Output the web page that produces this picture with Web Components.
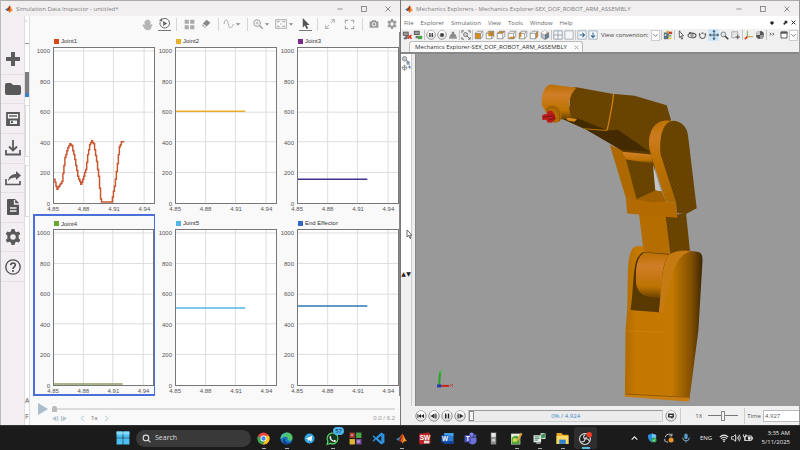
<!DOCTYPE html>
<html lang="en">
<head>
<meta charset="utf-8">
<title>Simulation desktop</title>
<style>
html, body { margin: 0; height: 100%; }
body { font: 6px/8px "Open Sans", "Noto Sans", sans-serif; color: #777; background: #f9f9f9; overflow: hidden; }
</style>
</head>
<body>
<desktop-shell>
  <inspector-window slot="left"></inspector-window>
  <mechanics-window slot="right"></mechanics-window>
  <task-bar slot="bar"></task-bar>
</desktop-shell>
<script>
const caret = '<path d="M1 3l3 3 3-3z" fill="#888"/>';
const cube = face => `<path d="M1.500 4L4 1.500h6.500v6L8 10.500H1.500z" fill="#fafafa"/>${face}<path d="M1.500 4H8v6.500H1.500zM1.500 4L4 1.500h6.500L8 4M10.500 1.500v6L8 10.500" fill="none" stroke="#777" stroke-width=".8"/>`;
const O = '#d98d18';
const round = inner => `<circle cx="6" cy="6" r="5.200" fill="#e6e6e6" stroke="#888" stroke-width=".9"/><path d="M2 5a4 4 0 0 1 8 0z" fill="#fff"/>${inner}`;
const ICONS = {
  matlab: ['0 0 16 16', '<path d="M0 9l5-3 3 2-3 4z" fill="#3f7fb5"/><path d="M5 6c2-1 3-5 5-5 1 2 3 8 6 11-3-1-4 0-7 4 0-3-2-4-4-4l2-2z" fill="#d9531e"/><path d="M10 1c-1 4-2 8-5 11l-1-1c2-4 4-5 6-10z" fill="#7c2415"/><path d="M10 2c1 4 1 8-1 13 2-3 4-4 7-3C13 9 12 5 10 2z" fill="#ee9a2d"/>'],
  min: ['0 0 8 8', '<path d="M1.500 4h5" stroke="#888" stroke-width=".9"/>'],
  max: ['0 0 8 8', '<rect x="1.500" y="1.500" width="4.800" height="5" fill="none" stroke="#777" stroke-width=".8"/>'],
  close: ['0 0 8 8', '<path d="M1.500 1.500l5 5m0-5l-5 5" stroke="#777" stroke-width=".8"/>'],
  plus: ['0 0 16 16', '<path d="M6 1h4v5h5v4h-5v5H6v-5H1V6h5z" fill="#5c5c5c"/>'],
  folder: ['0 0 16 16', '<path d="M0 4q0-2 2-2h4l2 2h6q2 0 2 2v6q0 2-2 2H2q-2 0-2-2z" fill="#595959"/>'],
  save: ['0 0 16 16', '<path d="M2 2h12v12H2z" fill="#f6f3f5" stroke="#5a5a5a" stroke-width="1.800"/><path d="M4 5h8" stroke="#5a5a5a" stroke-width="1.400"/><path d="M2 7.500h12V14H2z" fill="#5a5a5a"/><path d="M5 9.500h7V13H5z" fill="#f0f0f0"/><path d="M6 10.300h1.800v1.800H6z" fill="#333"/>'],
  download: ['0 0 16 16', '<path d="M8 0v10M4 6.500l4 4 4-4M1 10v4.500h14V10" fill="none" stroke="#5a5a5a" stroke-width="1.800"/>'],
  share: ['0 0 16 16', '<path d="M1 9v5.500h14V11" fill="none" stroke="#5a5a5a" stroke-width="1.700"/><path d="M3 11c1-5 4-7 8-7V1l5 4.500-5 4.500V7.500c-4 0-6 1-8 3.500z" fill="#5a5a5a"/>'],
  doc: ['0 0 16 16', '<path d="M2 1q0-1 1-1h7l4 4v11q0 1-1 1H3q-1 0-1-1z" fill="#555"/><path d="M9.500 1v4H14M5 9h6.500M5 12h6.500" stroke="#f4f0f2" stroke-width="1.300" fill="none"/>'],
  gear: ['0 0 16 16', '<path d="M6.500 0h3l.5 2.300 1.500.9 2.300-.8 1.500 2.600-1.700 1.600v2.800l1.700 1.600-1.500 2.600-2.300-.8-1.500.9-.5 2.300h-3L6 13.700l-1.500-.9-2.300.8L.700 11l1.700-1.600V6.600L.700 5l1.500-2.600 2.300.8L6 2.300zM8 5.200a2.800 2.800 0 1 0 0 5.600 2.800 2.800 0 0 0 0-5.600z" fill="currentColor" fill-rule="evenodd"/>'],
  help: ['0 0 16 16', '<circle cx="8" cy="8" r="7.200" fill="none" stroke="#4c4c4c" stroke-width="1.300"/><path d="M5.700 6.300C5.800 3.300 10.300 3.300 10.300 6 10.300 8 8 7.800 8 10" fill="none" stroke="#4c4c4c" stroke-width="1.600"/><circle cx="8" cy="12" r="1" fill="#4c4c4c"/>'],
  hand: ['0 0 16 16', '<path d="M4 8V3.500q1-1.500 2 0V2q1-1.500 2 0v-.5q1-1.500 2 0V3q1-1 2 .2V10l1.200-2q1.500-.8 1.800.5L12.500 14q-.5 2-3 2-4 0-5.500-2L1 9.500Q1 8 2.500 8L4 9.500z" fill="#b5b5b5" stroke="#aaa" stroke-width=".4"/>'],
  replay: ['0 0 16 16', '<path d="M3 3A7 7 0 1 1 1.500 6" fill="none" stroke="#666" stroke-width="1.400"/><path d="M0 4.500L5 5 4 0z" fill="#666"/><path d="M6 4.500L12 8l-6 3.500z" fill="#666"/>'],
  grid: ['0 0 16 16', '<path d="M1 1h6v6H1zM9 1h6v6H9zM1 9h6v6H1zM9 9h6v6H9z" fill="#aaa"/>'],
  eraser: ['0 0 16 16', '<path d="M9 1l6 5-6 6-6-5z" fill="#888"/><path d="M2.500 8l5.500 5-2 1.500-5-4z" fill="#bbb"/>'],
  wave: ['0 0 16 16', '<path d="M0 8C2-2 5 1 6 5l2 7c1 4 5 2 7-4" fill="none" stroke="#aaa" stroke-width="1.500"/>'],
  caret: ['0 0 8 8', caret],
  zoom: ['0 0 16 16', '<circle cx="6.500" cy="6.500" r="5.300" fill="none" stroke="#999" stroke-width="1.500"/><path d="M10.500 10.500L15.500 15.500" stroke="#999" stroke-width="2"/><path d="M4 6.500h5M6.500 4v5" stroke="#aaa" stroke-width="1.300"/>'],
  fit: ['0 0 18 16', '<rect x="1" y="1.500" width="16" height="13" fill="none" stroke="#aaa" stroke-width="1.400"/><path d="M4 6V4h3M11 4h3v2M14 10v2h-3M7 12H4v-2M8 8h2" fill="none" stroke="#999" stroke-width="1.400"/>'],
  pointer: ['0 0 16 16', '<path d="M4 0l10 10H9.500l2.500 5-2.500 1L7 11l-3 3z" fill="#555"/>'],
  expand: ['0 0 16 16', '<path d="M9.500 6.500L15 1M10 1h5v5M6.500 9.500L1 15M1 10v5h5" fill="none" stroke="#aaa" stroke-width="1.500"/>'],
  full: ['0 0 16 16', '<path d="M2 6V2h4M10 2h4v4M14 10v4h-4M6 14H2v-4" fill="none" stroke="#aaa" stroke-width="1.700"/>'],
  camera: ['0 0 16 16', '<path d="M1 4h3l1-2h6l1 2h3v10H1z" fill="#999"/><circle cx="8" cy="8.500" r="3.500" fill="#f5f5f5"/><circle cx="8" cy="8.500" r="2" fill="#999"/>'],
  playpale: ['0 0 10 12', '<path d="M0 0l10 6-10 6z" fill="#a9bfcd"/>'],
  stepback: ['0 0 8 8', '<path d="M5 1v6L0 4zM6 1h1.200v6H6z" fill="#b3c6d2"/>'],
  stepfwd: ['0 0 8 8', '<path d="M3 1v6l5-3zM1 1h1.200v6H1z" fill="#b3c6d2"/>'],
  left: ['0 0 8 8', '<path d="M5.500 1L2.500 4l3 3" fill="none" stroke="#9db8c8"/>'],
  right: ['0 0 8 8', '<path d="M2.500 1l3 3-3 3" fill="none" stroke="#9db8c8"/>'],
  kill: ['0 0 12 12', '<path d="M1 2h7v5H1z" fill="#555"/><path d="M2 3h5v3H2z" fill="#999"/><path d="M4 7h3v3H4zM2 9h4v2H2z" fill="#666"/><path d="M7 6l4.500 4.500m0-4.500L7 10.500" stroke="#d03020" stroke-width="1.700"/>'],
  connect: ['0 0 12 12', '<path d="M1 1h7v5H1z" fill="#555"/><path d="M2 2h5v3H2z" fill="#999"/><path d="M3 7h3v3H3z" fill="#777"/><path d="M6 7h5v4H6z" fill="#42a744"/>'],
  rpause: ['0 0 12 12', round('<path d="M4 3.500h1.400v5H4zM6.800 3.500h1.400v5H6.800z" fill="#222"/>')],
  rstop: ['0 0 12 12', round('<path d="M4 4h4v4H4z" fill="#333"/>')],
  rfirst: ['0 0 12 12', round('<path d="M6 4v4L3.200 6zM9 4v4L6.200 6zM2.500 4h.8v4h-.8z" fill="#222"/>')],
  rprev: ['0 0 12 12', round('<path d="M6.500 3.500v5L2.500 6zM7.300 3.500h1.200v5H7.300z" fill="#333"/>')],
  rnext: ['0 0 12 12', round('<path d="M5.500 3.500v5l4-2.500zM3.500 3.500h1.200v5H3.500z" fill="#333"/>')],
  rloop: ['0 0 12 12', round('<path d="M3 3.500h6v4H7.500V9L5.500 7.500H3z" fill="#333"/><path d="M4.500 5h3v1.200h-3z" fill="#eee"/>')],
  weight: ['0 0 12 12', '<path d="M4.500 2h3v3h1.500l1.500 5h-9L3 5h1.500z" fill="#888"/><path d="M1.500 8h9v2.500h-9z" fill="#999"/>'],
  fitview: ['0 0 12 12', '<path d="M1 3.500V1h2.500M8.500 1H11v2.500M11 8.500V11H8.500M3.500 11H1V8.500" fill="none" stroke="#555"/><circle cx="5.500" cy="5.500" r="2.500" fill="#ccc" stroke="#555" stroke-width=".8"/><path d="M7 7l3 3" stroke="#555"/>'],
  cfront: ['0 0 12 12', cube(`<path d="M1.500 4H8v6.500H1.500z" fill="${O}"/>`)],
  cback: ['0 0 12 12', cube(`<path d="M4 1.500h6.500v6H4z" fill="${O}"/>`)],
  ctop: ['0 0 12 12', cube(`<path d="M1.500 4L4 1.500h6.500L8 4z" fill="${O}"/>`)],
  cbottom: ['0 0 12 12', cube(`<path d="M1.500 10.500L4 8h6.500L8 10.500z" fill="${O}"/>`)],
  cleft: ['0 0 12 12', cube(`<path d="M1.500 4L4 1.500v6L1.500 10.500z" fill="${O}"/>`)],
  cright: ['0 0 12 12', cube(`<path d="M8 4l2.500-2.500v6L8 10.500z" fill="${O}"/>`)],
  ciso: ['0 0 12 12', '<path d="M6 1l4.500 2v6L6 11.500 1.500 9V3z" fill="#b8bec6" stroke="#777" stroke-width=".7"/><path d="M6 1l4.500 2L6 5 1.500 3z" fill="#fff"/><path d="M6 5l4.500-2v6L6 11.500z" fill="#6d7c8c"/><path d="M8 2l2 1-2 1z" fill="#d98d18"/>'],
  split4: ['0 0 12 12', '<path d="M1 1h10v10H1zM6 1v10M1 6h10" fill="#f8f8f8" stroke="#8d99a6"/>'],
  single: ['0 0 12 12', '<path d="M1 1h10v10H1z" fill="#f4f6f8" stroke="#9aa5b0"/>'],
  splitv: ['0 0 12 12', '<path d="M1 1h10v10H1z" fill="#f4f7fa" stroke="#9aa9b8"/><path d="M3 6h6M6.500 3.500L9 6 6.500 8.500" fill="none" stroke="#3a6b96" stroke-width="1.300"/>'],
  splith: ['0 0 12 12', '<path d="M1 1h10v10H1z" fill="#f4f7fa" stroke="#9aa9b8"/><path d="M6 3v6M3.500 6.500L6 9l2.500-2.500" fill="none" stroke="#3a6b96" stroke-width="1.300"/>'],
  palette: ['0 0 12 12', '<path d="M1 3h6v8H1z" fill="#556d86"/><path d="M4 1h3v3H4z" fill="#d8a33b"/><path d="M7 2h4v3H7z" fill="#bc4a34"/><path d="M6 6h4v2H6z" fill="#7db65c"/><path d="M6 9h4v2H6z" fill="#e7c03c"/><path d="M2 5h2v2H2z" fill="#e5e5e5"/>'],
  select: ['0 0 12 12', '<path d="M4 1l5 6H6.500L8 10.500l-1.200.5-1.500-3.300L4 9z" fill="#fff" stroke="#333" stroke-width=".9"/>'],
  orbit: ['0 0 12 12', '<ellipse cx="6" cy="6.500" rx="4.800" ry="2.800" fill="none" stroke="#555" stroke-width="1.300"/><circle cx="6" cy="6.500" r="2" fill="#999"/><path d="M2 3l3-1-1 3z" fill="#555"/>'],
  roll: ['0 0 12 12', '<path d="M2 4q0 6 4 6t4-6" fill="none" stroke="#666" stroke-width="1.500"/><path d="M4.500 2h3v2h-3zM.5 5L2 2l2 3zM8 5l1.500-3 2 3z" fill="#777"/>'],
  pan: ['0 0 12 12', '<path d="M6 0v12M0 6h12" stroke="#47657f" stroke-width="1.200"/><path d="M4 2.500L6 0l2 2.500zM4 9.500L6 12l2-2.500zM2.500 4L0 6l2.500 2zM9.500 4L12 6 9.500 8z" fill="#47657f"/>'],
  lens: ['0 0 12 12', '<circle cx="4.500" cy="4.500" r="3.200" fill="#dce6ef" stroke="#777" stroke-width="1.200"/><path d="M7 7l4 4" stroke="#333" stroke-width="1.800"/>'],
  region: ['0 0 12 12', '<path d="M1 1h8v8H1z" fill="#e4e7ea" stroke="#999"/><path d="M9 5v6M6 8h6" stroke="#555" stroke-width="1.300"/>'],
  axes: ['0 0 12 12', '<path d="M4 8V1" stroke="#72b353" stroke-width="1.200"/><path d="M4 8h7" stroke="#c59a42" stroke-width="1.200"/><path d="M4 8l-3 3" stroke="#e03a20" stroke-width="2"/>'],
  sphere: ['0 0 12 12', '<circle cx="6" cy="6" r="4.800" fill="#555"/><path d="M6 1.200A4.800 4.800 0 0 0 1.200 6H6z" fill="#c9c9c9"/><path d="M6 6h4.800A4.800 4.800 0 0 1 6 10.800z" fill="#999"/>'],
  more: ['0 0 8 8', '<path d="M1 1l1.500 1.500L1 4M4 1l1.500 1.500L4 4" fill="none" stroke="#333"/>'],
  win: ['0 0 12 12', '<path d="M1.500 1.500h9v9h-9z" fill="#fff" stroke="#444" stroke-width="1.300"/><path d="M1 1h10v3H1z" fill="#555"/>'],
  down: ['0 0 8 8', '<path d="M1.500 2.500L4 5l2.500-2.500" fill="none" stroke="#666"/>'],
  dock: ['0 0 8 8', '<path d="M2 2h4v2H2zM1 3.500h6L4 6.500z" fill="#222"/>'],
  undock: ['0 0 8 8', '<path d="M3 1h4v4L5.500 4 3 6.500 1.500 5 4 2.800z" fill="#222"/>'],
  x: ['0 0 8 8', '<path d="M1 1l6 6m0-6L1 7" stroke="currentColor" stroke-width="1.500"/>'],
  tree: ['0 0 12 24', '<circle cx="4" cy="5" r="3" fill="#c4c9ce" stroke="#777"/><path d="M6 6l5 3v4H7z" fill="#8d9aa8"/><circle cx="4" cy="17" r="3" fill="none" stroke="#999"/><path d="M0 17h8M4 13v8" stroke="#777"/><path d="M9 15q2-2 3 0v3h-2z" fill="#5c8bb9"/>'],
  chrome: ['0 0 24 24', '<circle cx="12" cy="12" r="11" fill="#e8453c"/><path d="M2 7a11 11 0 0 0 9 16l5-9-8-1z" fill="#36a852"/><path d="M11 23A11 11 0 0 0 22 7H12l4 7z" fill="#fbc21c"/><circle cx="12" cy="12" r="5.500" fill="#fff"/><circle cx="12" cy="12" r="4" fill="#4285f4"/>'],
  edge: ['0 0 24 24', '<circle cx="12" cy="12" r="11" fill="#1b76c4"/><path d="M1 13C1 3 10 1 14 1c7 1 10 7 9 11-1 5-8 5-9 2 2-5-4-8-13-1z" fill="#4fc36a"/><path d="M1 13C2 5 9 2 14 4c-5-1-8 1-9 4z" fill="#47c8e5"/><path d="M9 13c-1 6 5 9 12 6-4 5-12 5-15 1-2-4 0-8 4-9z" fill="#123f87"/>'],
  telegram: ['0 0 24 24', '<circle cx="12" cy="12" r="11" fill="#2fa6de"/><path d="M4 12l14-6-2 13-5-4-2 3-1-5z" fill="#fff"/>'],
  whatsapp: ['0 0 24 24', '<path d="M2 23l1.500-6A10 10 0 1 1 8 21z" fill="#15391f" stroke="#58d36b" stroke-width="2.200"/><path d="M8 7l2 3-1 1q2 4 5 5l1.500-1.500 3 1.500q-1 3-4 2-7-2-8-8 0-2 1.500-3z" fill="#fff"/>'],
  blocks: ['0 0 24 24', '<path d="M1 1h10v10H1z" fill="#a5342b"/><path d="M13 1h10v10H13z" fill="#49a447"/><path d="M1 13h10v10H1z" fill="#ddb636"/><path d="M13 13h10v10H13z" fill="#7b4c9e"/><path d="M3 3h5v5H3zM15 15h5v5h-5z" fill="#ffffff66"/>'],
  vscode: ['0 0 24 24', '<path d="M17 1l6 3v16l-6 3L7 14l-4 4-2-2 4-4-4-4 2-2 4 4zM17 7l-6 5 6 5z" fill="#2f91dc" fill-rule="evenodd"/>'],
  solid: ['0 0 24 24', '<path d="M2 3l18-2 3 4v16L4 23l-2-3z" fill="#b92527"/><text x="3" y="14" font-size="12" font-weight="700" fill="#fff">SW</text><path d="M11 16h10v5H11z" fill="#ddd"/>'],
  word: ['0 0 24 24', '<path d="M6 2h17v20H6z" fill="#2b7cd3"/><path d="M6 2h17v5H6z" fill="#41a5ee"/><path d="M6 17h17v5H6z" fill="#103f91"/><path d="M1 6h13v13H1z" fill="#185abd"/><text x="2" y="17" font-size="12" font-weight="700" fill="#fff">W</text>'],
  teams: ['0 0 24 24', '<circle cx="14" cy="5" r="4" fill="#7b83eb"/><circle cx="20" cy="7" r="3" fill="#5059c9"/><path d="M9 10h14v8q-2 5-8 5-6-1-6-6z" fill="#6a72d8"/><path d="M1 6h12v13H1z" fill="#4b53bc"/><text x="3" y="17" font-size="12" font-weight="700" fill="#fff">T</text>'],
  device: ['0 0 24 24', '<path d="M7 1h10v22H7z" fill="#8c8c8c"/><path d="M8 2h8v7H8z" fill="#e8e8e8"/><circle cx="12" cy="15" r="3" fill="#ccc"/>'],
  notepad: ['0 0 24 24', '<path d="M2 3h17v20H2z" fill="#e3efd9"/><path d="M3 11q8-8 15 0v11H3z" fill="#55a33a"/><circle cx="9" cy="15" r="4" fill="#c8df52"/><path d="M20 1l3 3-8 12-3 1 1-4z" fill="#e0a143"/>'],
  project: ['0 0 24 24', '<path d="M1 6h14v13H1z" fill="#e7ece8"/><path d="M3 9h9M3 12h9M3 15h6" stroke="#6c9a80" stroke-width="2"/><path d="M14 2h9v11h-9z" fill="#d1e8d4"/><path d="M15 5l7-3v8l-7 2z" fill="#40935a"/><path d="M6 19h8v3H6z" fill="#aaa"/>'],
  files: ['0 0 24 24', '<path d="M1 2h9l3 3h10v17H1z" fill="#e8a522"/><path d="M1 7h22v15H1z" fill="#ffd766"/><path d="M6 14h12v8H6z" fill="#2f83d1"/>'],
  obs: ['0 0 24 24', '<circle cx="11" cy="13" r="10" fill="#222" stroke="#ddd" stroke-width="2"/><path d="M11 5q-5 4 0 8 6-2 8 4M11 13q-1 6-7 5M11 13l3-4" fill="none" stroke="#ddd" stroke-width="2"/><circle cx="19" cy="5" r="5" fill="#f23b26"/>'],
  start: ['0 0 24 24', '<path d="M1 1h10.500v10.500H1zM12.500 1H23v10.500H12.500zM1 12.500h10.500V23H1zM12.500 12.500H23V23H12.500z" fill="#4cc0f5"/><path d="M1 1h10.500v5H1zM12.500 1H23v5H12.500z" fill="#84dbfb"/>'],
  search: ['0 0 16 16', '<circle cx="7" cy="7" r="5" fill="none" stroke="#ddd" stroke-width="2"/><path d="M11 11l4 4" stroke="#ddd" stroke-width="2"/>'],
  up: ['0 0 16 16', '<path d="M3 10l5-5 5 5" fill="none" stroke="#eee" stroke-width="2"/>'],
  shield: ['0 0 24 24', '<path d="M12 1l10 4q0 13-10 18Q2 18 2 5z" fill="#2a8edb"/><path d="M12 1l10 4v7H12z" fill="#6fc2f2"/><circle cx="17" cy="17" r="6" fill="#2fa84f"/><path d="M14 17l2 2 4-4" fill="none" stroke="#fff" stroke-width="1.800"/>'],
  sync: ['0 0 24 24', '<path d="M3 10a9 9 0 0 1 16-4M19 1v6h-6M3 21a9 9 0 0 1-1-7M10 22a9 9 0 0 1-7-3" fill="none" stroke="#bbb" stroke-width="2.400"/><circle cx="17" cy="17" r="6" fill="#f0932b"/>'],
  mic: ['0 0 24 24', '<rect x="8" y="1" width="8" height="14" rx="4" fill="#5b9fc9"/><path d="M4 11q0 8 8 8t8-8M12 19v4" fill="none" stroke="#8fc0dd" stroke-width="2"/>'],
  wifi: ['0 0 24 24', '<path d="M2 10Q12 0 22 10M5 13.500q7-6.500 14 0M8.500 17q3.500-3 7 0" fill="none" stroke="#eee" stroke-width="2.600"/><circle cx="12" cy="20" r="2" fill="#eee"/>'],
  volume: ['0 0 24 24', '<path d="M1 9h4l6-5v16l-6-5H1z" fill="none" stroke="#eee" stroke-width="2"/><path d="M14 9q2 3 0 6M17 6q4 6 0 12M20 4q5 8 0 16" fill="none" stroke="#ddd" stroke-width="2"/>'],
  battery: ['0 0 24 24', '<path d="M5 7h15v11H5zM20 10h3v5h-3" fill="none" stroke="#eee" stroke-width="2"/><path d="M12 9h6v7h-6z" fill="#eee"/><path d="M1 3v6h6V3M4 9v10" stroke="#eee" stroke-width="2" fill="none"/>']
};

function define(name, css, html) {
  const t = document.createElement('template');
  customElements.define(name, class extends HTMLElement {
    connectedCallback() {
      if (this.shadowRoot) return;
      t.innerHTML = `<style>*,:host{box-sizing:border-box}button{appearance:none;border:0;background:none;padding:0;margin:0;font:inherit;color:inherit;display:grid;place-items:center}${css}</style>${typeof html === 'function' ? html(this) : html}`;
      this.attachShadow({ mode: 'open' }).append(t.content.cloneNode(true));
    }
  });
}
const ic = (n, s = 10) => `<ui-icon name="${n}" style="--s:${s}px"></ui-icon>`;
const btn = (n, label, s = 10, cls = '') => `<button aria-label="${label}" class="${cls}">${ic(n, s)}</button>`;

// Turns "x,y x,y ..." into a sample-and-hold path with one step per unit of x.
function stairs(points) {
  const p = points.split(' ').map(q => q.split(',').map(Number));
  let d = `M${p[0]}`;
  for (let i = 1; i < p.length; i++) {
    const [x0, y0] = p[i - 1], [x1, y1] = p[i];
    for (let x = x0 + 1; x <= x1; x++) d += `H${x}V${Math.round(y0 + (y1 - y0) * (x - x0) / (x1 - x0))}`;
  }
  return d;
}

define('ui-icon', ':host{display:block;width:var(--s);height:var(--s);flex:none}svg{display:block;width:100%;height:100%;overflow:visible;font-family:"Liberation Sans",sans-serif}',
  el => { const [v, p] = ICONS[el.getAttribute('name')]; return `<svg viewBox="${v}" aria-hidden="true">${p}</svg>`; });

define('desktop-shell', `:host{display:grid;grid-template:minmax(0,1fr) 25px / minmax(0,1fr) minmax(0,1fr);height:100vh}
  slot[name=bar]::slotted(*){grid-column:1/-1}`,
  '<slot name="left"></slot><slot name="right"></slot><slot name="bar"></slot>');

define('title-bar', `:host{display:flex;align-items:center;height:16px;flex:none;padding:0 8px 0 4px;background:#f1eff0;color:#808080;border-top:1px solid #aaa}
  .t{margin-left:3px;white-space:nowrap;flex:1}
  button{width:8px;height:12px;margin-left:16px}`,
  `${ic('matlab', 8)}<span class="t"><slot></slot></span>${btn('min', 'Minimize', 8)}${btn('max', 'Maximize', 8)}${btn('close', 'Close', 8)}`);

define('signal-chart', `:host{display:grid;grid-template:14px minmax(0,1fr) 9px / 19px minmax(0,1fr);min-width:0;min-height:0;font:6px/8px "Liberation Sans Narrow","Liberation Sans",sans-serif;color:#555;border:1px solid transparent;border-right:0}
  :host([selected]){border:2px solid #4a6fd8;border-right-width:1px;grid-template-rows:13px minmax(0,1fr) 8px;grid-template-columns:18px minmax(0,1fr)}
  .h{grid-column:2;display:flex;align-items:center;gap:2px;font-family:"Liberation Sans",sans-serif;color:#333;padding:2px 0 0 1px}
  .h i{width:5px;height:5px;background:var(--c)}
  .y{grid-area:2/1;display:flex;flex-direction:column;justify-content:space-between;align-items:flex-end;margin-bottom:-4px;padding-right:3px}
  .p{grid-area:2/2;border:1px solid #777;background:#fff;min-height:0}
  .p svg{display:block;width:100%;height:100%}
  .x{grid-area:3/2;display:flex;margin:1px 0 0 -15px}
  .x span{flex:0 0 26%;text-align:center}`,
  el => `<div class="h" style="--c:${el.getAttribute('color')}"><i></i><span>${el.getAttribute('label')}</span></div>
  <div class="y"><span>1000</span><span>800</span><span>600</span><span>400</span><span>200</span><span>0</span></div>
  <div class="p"><svg viewBox="0 0 101 157" preserveAspectRatio="none" aria-hidden="true">
  <path d="M30 0v157M60 0v157M91 0v157M0 3h101M0 34h101M0 65h101M0 95h101M0 126h101" stroke="#ddd" vector-effect="non-scaling-stroke"/>
  <path d="${stairs(el.getAttribute('trace'))}" fill="none" stroke="${el.getAttribute('stroke') || el.getAttribute('color')}" stroke-width="1.500"/></svg></div>
  <div class="x"><span>4.85</span><span>4.88</span><span>4.91</span><span>4.94</span></div>`);

define('inspector-window', `:host{display:flex;flex-direction:column;min-width:0;min-height:0;border-left:1px solid #bbb;background:#f9f9f9}
  .b{flex:1;display:grid;grid-template-columns:24px 5px minmax(0,1fr);min-height:0}
  nav{background:#f2eef1;padding-top:29px;border-right:1px solid #ddd;color:#5a5a5a}
  nav div{display:flex;flex-direction:column;height:237px}
  nav button{flex:1;width:100%;border-bottom:1px solid #e3dfe2}
  .k{overflow:hidden;background:#fff;display:flex;flex-direction:column;color:#555;font-size:7px;border-right:1px solid #ddd}
  .k .c{height:28px;border-bottom:1px solid #999;flex:none;line-height:9px;color:#aaa}
  .k .d{margin-top:28px;height:25px;background:#7b7d80;border-bottom:4px solid #3c81bd;flex:none}
  .k .e{height:52px;margin-top:8px;flex:none;border:1px solid #ddd;border-right:0}
  .k p{margin:0;height:16px;line-height:16px}
  .k .g{flex:1}
  main{display:flex;flex-direction:column;min-width:0;min-height:0;padding-left:3px}
  .tb{height:16px;flex:none;display:grid;justify-content:end;align-items:center;color:#999;
   grid-template-columns:16px 18px 7px 18px 16px 8px 21px 8px 21px 25px 16px 9px 16px 22px 4px 19px 17px}
  .tb>*{justify-self:center}
  .tb button{display:flex;align-items:center;gap:1px;height:14px}
  .tb .on{border-bottom:1px solid #777;padding:0 1px}
  .tb hr{width:1px;height:13px;border:0;margin:0;background:#d5d5d5}
  .g2{flex:1;display:grid;grid-template:repeat(2,minmax(0,1fr))/repeat(3,minmax(0,1fr));min-height:0;border-right:1px solid #888}
  footer{height:29px;flex:none;display:grid;grid-template:10px 8px/15px 1fr auto;padding:8px 5px 0 4px;align-items:center;color:#999}
  footer .pl{width:12px;height:12px}
  input{appearance:none;grid-column:2/-1;width:100%;margin:0;height:8px;background:linear-gradient(#dcdcdc,#dcdcdc) center/100% 2px no-repeat}
  input::-webkit-slider-thumb{appearance:none;width:5px;height:6px;background:#bbb;border-radius:2px 2px 0 0}
  .st{grid-column:2;display:flex;align-items:center;gap:1px;color:#555}
  .st span{margin:0 4px;font-size:6px}.st .m{margin-left:11px}
  .st button{width:7px;height:8px}
  .tm{grid-column:3;font:6px/8px "Liberation Sans",sans-serif}`,
  `<title-bar>Simulation Data Inspector - untitled*</title-bar>
  <div class="b"><nav aria-label="Actions"><div>${[['plus', 'New'], ['folder', 'Open'], ['save', 'Save'], ['download', 'Import'], ['share', 'Export'], ['doc', 'Report'], ['gear', 'Preferences'], ['help', 'Help']].map(a => btn(a[0], a[1], 16)).join('')}</div></nav>
  <div class="k"><div class="c">‹</div><div class="d"></div><div class="e"></div><div class="e"></div><div class="g"></div><p>A</p><p>F</p></div>
  <main><div class="tb">${btn('hand', 'Pan', 11)}${btn('replay', 'Replay', 11, 'on')}<hr>${btn('grid', 'Layout', 11)}${btn('eraser', 'Clear', 10)}<hr>
  <button aria-label="Signals">${ic('wave', 10)}${ic('caret', 6)}</button><hr><button aria-label="Zoom">${ic('zoom', 10)}${ic('caret', 6)}</button><button aria-label="Fit">${ic('fit', 12)}${ic('caret', 6)}</button>
  ${btn('pointer', 'Select', 11, 'on')}<hr>${btn('expand', 'Expand', 10)}${btn('full', 'Full screen', 11)}<hr>${btn('camera', 'Snapshot', 10)}${btn('gear', 'Settings', 10)}</div>
  <div class="g2">
  <signal-chart label="Joint1" color="#d9480f" stroke="#c9562f" trace="0,133 3,143 8,135 11,111 14,101 16,97 18,99 21,113 24,130 27,138 29,133 32,123 34,108 36,98 38,94 40,97 43,115 45,130 47,153 48,156 58,156 61,140 63,125 66,100 68,95 71,95"></signal-chart>
  <signal-chart label="Joint2" color="#e8b02a" trace="0,64 70,64"></signal-chart>
  <signal-chart label="Joint3" color="#762a8c" stroke="#3f3490" trace="0,133 70,133"></signal-chart>
  <signal-chart selected label="Joint4" color="#6aa62e" stroke="#8a9a60" trace="0,156 70,156"></signal-chart>
  <signal-chart label="Joint5" color="#52b7e6" trace="0,79 70,79"></signal-chart>
  <signal-chart label="End Effector" color="#3568c4" stroke="#2c78b4" trace="0,77 70,77"></signal-chart>
  </div>
  <footer><button class="pl" aria-label="Play">${ic('playpale', 12)}</button><input type="range" min="0" max="62" value="0" aria-label="Playback position">
  <div class="st">${btn('stepback', 'Step back', 7)}${btn('stepfwd', 'Step forward', 7)}<button class="m" aria-label="Slower">${ic('left', 7)}</button><span>1x</span>${btn('right', 'Faster', 7)}</div><div class="tm">0.0 / 6.2</div></footer></main></div>`);

define('robot-view', ':host{display:block;background:#999;min-width:0;min-height:0;overflow:hidden}svg{display:block;width:100%;height:100%}',
`<svg viewBox="416 54 382 352" preserveAspectRatio="xMidYMid slice" role="img" aria-label="Robot arm assembly">
<defs>
<linearGradient id="b" x1="0" x2="1"><stop offset="0" stop-color="#b06c00"/><stop offset=".15" stop-color="#c47800"/><stop offset=".6" stop-color="#c47900"/><stop offset=".85" stop-color="#845100"/><stop offset="1" stop-color="#3d2600"/></linearGradient>
<linearGradient id="c" x1="0" y1="0" x2="0" y2="1"><stop offset="0" stop-color="#ba7000"/><stop offset=".3" stop-color="#d07e28"/><stop offset=".75" stop-color="#bd7200"/><stop offset="1" stop-color="#674000"/></linearGradient>
<linearGradient id="l" x1="0" y1="0" x2="0" y2="1"><stop offset="0" stop-color="#bb7100"/><stop offset=".2" stop-color="#cd7b22"/><stop offset=".5" stop-color="#bd7100"/><stop offset="1" stop-color="#a96700"/></linearGradient>
<pattern id="d" width="12" height="12" patternUnits="userSpaceOnUse"><path d="M0 0h12v12H0z" fill="#634000"/><path d="M0 0h6v6H0zM6 6h6v6H6z" fill="#6e4600"/></pattern>
</defs>
<g transform="translate(530 70) scale(.33333)">
<path d="M325 430L408 438 420 558 340 550z" fill="#b56d00"/><path d="M405 438L466 430 479 555 420 558z" fill="url(#d)"/>
<path d="M268 235L360 245 372 285 376 366 318 390z" fill="url(#d)"/>
<path d="M268 237L360 245 368 282 284 268z" fill="url(#c)"/><path d="M262 237L360 245 361 254 262 244z" fill="#5a3a00"/>
<path d="M367 284L391 364 374 362z" fill="#c5c5c5"/>
<path d="M238 226L272 240 288 275 318 388 286 384z" fill="#ae6800"/>
<path d="M286 384L318 388 375 362 393 365 405 395 436 399 440 443 406 440 290 431z" fill="#b36a00"/>
<path d="M286 384L318 388 375 362 393 365 405 395 370 398z" fill="#a06000"/>
<path d="M120 54L138 53 245 72 312 78 408 107 421 150 395 250 270 238 168 179 92 146 118 110z" fill="url(#d)"/>
<path d="M138 145L232 182 262 180 357 246 270 240 168 180 92 146z" fill="#432a00"/>
<path d="M105 143l35 5-8 8-20-4z" fill="#d98b18"/><path d="M160 177l70 5" stroke="#b77300" stroke-width="3"/>
<path d="M249 73C246 105 238 145 230 181" fill="none" stroke="#cc8107" stroke-width="4"/>
<path d="M356 235C351 182 373 152 410 152L432 154 394 190 391 255 437 399 405 394 369 280z" fill="url(#l)"/>
<path d="M390 255C385 200 397 153 430 153 452 155 470 172 472 198L498 415 466 432 439 430 436 397z" fill="url(#d)"/>
<path d="M35 108C31 72 44 46 62 45L138 54C111 80 113 115 123 143L92 149 72 120 45 122z" fill="url(#c)"/>
<path d="M44 122C48 100 84 102 91 127 96 146 91 157 76 159L62 157z" fill="#b16b00"/><path d="M50 119q18-16 34 4 7 16 3 32" fill="none" stroke="#7b4d00" stroke-width="2"/>
<path d="M36 136l14-4 2-9 13 1 9 12 1 14-12 9-12-1-3-8-12 1z" fill="#b81c1c"/><path d="M37 143l30-5 6 8-16 4" fill="none" stroke="#7c1010" stroke-width="3"/>
</g>
<g transform="translate(530 230) scale(.33333)">
<path d="M292 130C294 70 302 47 325 48L338 49 341 66 416 74C430 64 450 60 468 61L500 65C514 68 516 78 515 96L503 300 477 500 476 508 283 498 285 300 290 238z" fill="url(#b)"/>
<path d="M341 66C300 90 314 150 300 240L385 247 404 96 416 72z" fill="#593900"/>
<path d="M341 67L416 74C398 94 394 125 392 204L355 200C325 196 314 170 315 140 316 102 324 76 341 67z" fill="url(#c)"/>
<path d="M385 247C392 190 390 100 416 74 440 62 460 62 480 64 420 80 415 180 400 247z" fill="#c67a12"/>
<path d="M339 67C308 86 316 120 314 160" fill="none" stroke="#4b3000" stroke-width="3"/>
<path d="M290 240L383 247M286 302L400 306" stroke="#db9020" stroke-width="2" opacity=".5"/>
<path d="M283 490L477 500 475 512 470 513 283 499z" fill="#c97d10"/><path d="M285 491L477 501" stroke="#754800" stroke-width="2"/>
</g>
<path d="M439 385l1-13" stroke="#23a62b" stroke-width="2"/><path d="M439 385.500h10" stroke="#c22818" stroke-width="2"/><path d="M437 384h4v3h-4z" fill="#1c3bb5"/><path d="M440 370l2 2m0-3l-2 4" stroke="#36c43b" stroke-width=".8"/><path d="M450 383.500l3 3m0-3l-3 3" stroke="#c03a30" stroke-width=".8"/>
</svg>`);

define('mechanics-window', `:host{display:flex;flex-direction:column;min-width:0;min-height:0;background:#f0f0f0;border-left:1px solid #777;border-right:1px solid #999;position:relative}
  .mn{height:13px;flex:none;background:#fff;display:flex;align-items:center;padding:0 3px;gap:7px;color:#666}
  .mn button:nth-last-child(3){margin-left:auto}
  .mn .q{margin-left:-4px;color:#222}
  .tl{height:12px;flex:none;display:flex;align-items:center;white-space:nowrap;color:#444}
  .tl button{width:11px;height:12px;flex:none}.tl .on{background:#cfe4f5}
  .tl hr{width:1px;height:10px;border:0;margin:0 0 0 1px;background:#c6c6c6;flex:none}
  .sl{display:flex;align-items:center;border:1px solid #ccc;background:#fff;width:9px;height:11px;position:relative;flex:none}
  select{appearance:none;position:absolute;inset:0;width:100%;border:0;background:none;opacity:0}
  label{margin:0 3px}
  .tabs{height:13px;flex:none;border-bottom:2px solid #888;display:flex;align-items:stretch;padding-left:8px}
  .tab{display:flex;align-items:center;gap:7px;background:#fafafa;border:1px solid #bbb;border-bottom:0;border-radius:3px 3px 0 0;padding:0 3px 0 5px;color:#333;white-space:nowrap}
  .tab button{color:#aaa}
  .c{flex:1;display:grid;grid-template-columns:11px 4px minmax(0,1fr);min-height:0}
  .tr{background:linear-gradient(#fff 62%,#f0f0f0 62%);padding-top:1px;overflow:hidden;border-right:1px solid #ccc}
  .sp{background:#eee;border-right:1px solid #888}
  .pb{height:19px;display:flex;align-items:center;padding-left:14px;color:#555;flex:none}
  .pb button{width:12px;height:12px;margin-right:1px;flex:none}
  .bar{flex:1;height:12px;border:1px solid #ccc;border-top-color:#999;background:#ececec;display:grid;align-items:center;text-align:center;color:#3f86c4;margin:0 2px 0 1px}
  .bar>*{grid-area:1/1}
  input[type=range]{appearance:none;margin:0;background:none;height:10px;min-width:0;width:100%}
  input[type=range]::-webkit-slider-thumb{appearance:none;width:5px;height:10px;border:1px solid #888;background:#f5f5f5}
  .pb .sep{width:1px;height:16px;background:#ccc;margin-left:2px}
  .pb [for=sp]{margin:0 0 0 14px}
  .pb [for=tm]{margin:0 2px}
  .pb .spd{width:30px;margin:0 4px 0 6px;flex:none;background:linear-gradient(#777,#777) center/100% 1px no-repeat}
  .pb .spd::-webkit-slider-thumb{width:4px}
  .pb input[type=text]{width:36px;height:12px;border:1px solid #bbb;border-right:0;background:#fff;font:inherit;color:#555;padding:0 1px}
  .cur{position:absolute;left:5px;top:229px}
  .col{position:absolute;left:0;top:270px;display:flex;color:#222;font:6px/8px "DejaVu Sans",sans-serif}
  .col button{width:5px}`,
  `<title-bar>Mechanics Explorers - Mechanics Explorer-SEX_DOF_ROBOT_ARM_ASSEMBLY</title-bar>
  <div class="mn"><button>File</button><button>Explorer</button><button>Simulation</button><button>View</button><button>Tools</button><button>Window</button><button>Help</button>${btn('dock', 'Dock', 6)}${btn('undock', 'Undock', 6)}${btn('x', 'Close panel', 5, 'q')}</div>
  <div class="tl">${btn('kill', 'Disconnect')}${btn('connect', 'Connect')}<hr>${btn('rpause', 'Pause')}${btn('rstop', 'Stop')}${btn('weight', 'Mass')}<hr>${btn('fitview', 'Fit to view')}<hr>
  ${['front', 'back', 'top', 'bottom', 'left', 'right', 'iso'].map(n => btn('c' + n, n + ' view')).join('')}<hr>${btn('split4', 'Four views')}${btn('single', 'Single view')}<hr>${btn('splitv', 'Split vertically')}${btn('splith', 'Split horizontally')}
  <label for="vc">View convention:</label><span class="sl">${ic('down', 7)}<select id="vc"><option>Z up</option></select></span><hr>
  ${btn('palette', 'Colors')}<hr>${btn('select', 'Select')}${btn('orbit', 'Rotate')}${btn('roll', 'Roll', 9)}${btn('pan', 'Pan', 10, 'on')}${btn('lens', 'Zoom', 9)}${btn('region', 'Zoom region', 9)}<hr>${btn('axes', 'Frames')}${btn('sphere', 'Shading')}<hr>
  ${btn('more', 'More', 7)}${btn('win', 'Layout', 8)}<span class="sl">${ic('down', 7)}<select aria-label="Window layout"><option>Layout</option></select></span></div>
  <div class="tabs"><div class="tab"><span>Mechanics Explorer-SEX_DOF_ROBOT_ARM_ASSEMBLY</span>${btn('x', 'Close tab', 5)}</div></div>
  <div class="c"><div class="tr"><ui-icon name="tree" style="--s:18px;width:10px"></ui-icon></div><div class="sp"></div><robot-view></robot-view></div>
  <div class="pb">${btn('rfirst', 'First', 12)}${btn('rprev', 'Step back', 12)}${btn('rpause', 'Pause', 12)}${btn('rnext', 'Step forward', 12)}
  <div class="bar"><input type="range" value="0" aria-label="Progress"><span>0% / 4.924</span></div>${btn('rloop', 'Loop', 12)}<span class="sep"></span>
  <label for="sp">1X</label><input class="spd" id="sp" type="range" value="50"><span class="sep"></span><label for="tm">Time</label><input id="tm" type="text" value="4.927"></div>
  <div class="col"><button aria-label="Collapse up">▲</button><button aria-label="Collapse down">▼</button></div>
  <svg class="cur" width="7" height="10" viewBox="0 0 7 10" aria-hidden="true"><path d="M1 1v7l1.700-1.500L4 9.500l1-.5-1.300-2.800H6z" fill="#fff" stroke="#333" stroke-width=".7"/></svg>`);

define('task-bar', `:host{display:flex;align-items:center;background:#1b1b1b;color:#e8e8e8;padding:0 10px 0 116px;border-top:1px solid #333;font:7px/10px "Open Sans",sans-serif}
  .s{display:flex;align-items:center;gap:4px;width:115px;height:17px;border-radius:9px;background:#393939;padding:0 6px;margin:0 1px 0 6px}
  .s input{border:0;background:none;outline:0;padding:0;font:inherit;color:#ddd;min-width:0;flex:1}
  .s input::placeholder{color:#ddd;opacity:1}
  .a{display:flex}
  .a button{width:23px;height:22px;position:relative}
  .a .run::after{content:"";position:absolute;bottom:0;width:4px;height:1px;background:#aaa}
  .a .act{background:#2e2e2e;border-radius:3px}.a .act::after{width:8px;height:2px;background:#5bb8e8}
  .bd{position:absolute;right:0;top:0;background:#4cb3e8;color:#124;border-radius:5px;padding:0 2px;font-size:6px;line-height:8px}
  .t{margin-left:auto;display:flex;align-items:center;font-size:6px;line-height:9px}
  .t button{width:17px}.t .n{width:12px}
  .e{width:24px;text-align:center}
  .d{text-align:right;width:36px}`,
  `<button aria-label="Start">${ic('start', 14)}</button>
  <div class="s">${ic('search', 9)}<input type="search" aria-label="Search" placeholder="Search"></div>
  <div class="a">${[['chrome', 1], ['edge', 1], ['telegram'], ['whatsapp', 1], ['blocks'], ['vscode'], ['matlab', 1], ['solid'], ['word'], ['teams'], ['device'], ['notepad', 1], ['project', 1], ['files', 1], ['obs', 1]].map(([n, r]) => `<button aria-label="${n}" class="${r ? 'run' : ''} ${n === 'obs' ? 'act' : ''}">${ic(n, n === 'telegram' || n === 'matlab' ? 11 : 13)}${n === 'whatsapp' ? '<span class="bd">57</span>' : ''}</button>`).join('')}</div>
  <div class="t">${btn('up', 'Hidden icons', 9)}${btn('shield', 'Security', 10)}${btn('sync', 'Updates', 10)}${btn('mic', 'Microphone', 10)}<span class="e">ENG</span>${btn('wifi', 'Wi-Fi', 10, 'n')}${btn('volume', 'Volume', 10, 'n')}${btn('battery', 'Battery', 10, 'n')}<div class="d">3:35 AM<br>5/11/2025</div></div>`);
</script>
</body>
</html>
